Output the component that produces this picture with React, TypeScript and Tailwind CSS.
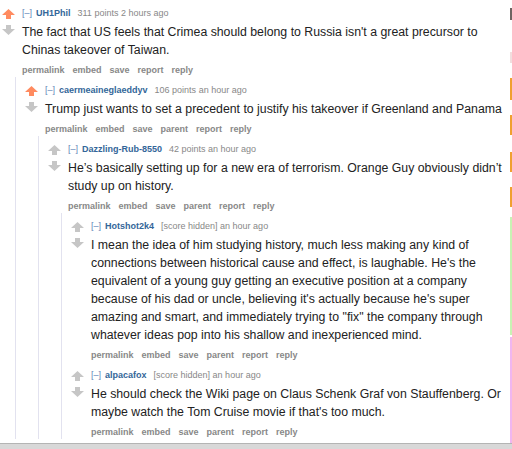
import React from 'react';

type Comment = {
  author: string;
  score: string;
  time: string;
  body: string;
  upvoted?: boolean;
  parent?: boolean;
  replies?: Comment[];
};

const thread: Comment = {
  author: 'UH1Phil',
  score: '311 points',
  time: '2 hours ago',
  upvoted: true,
  body: "The fact that US feels that Crimea should belong to Russia isn't a great precursor to Chinas takeover of Taiwan.",
  replies: [
    {
      author: 'caermeaineglaeddyv',
      score: '106 points',
      time: 'an hour ago',
      upvoted: true,
      parent: true,
      body: 'Trump just wants to set a precedent to justify his takeover if Greenland and Panama',
      replies: [
        {
          author: 'Dazzling-Rub-8550',
          score: '42 points',
          time: 'an hour ago',
          parent: true,
          body: "He\u2019s basically setting up for a new era of terrorism. Orange Guy obviously didn\u2019t study up on history.",
          replies: [
            {
              author: 'Hotshot2k4',
              score: '[score hidden]',
              time: 'an hour ago',
              parent: true,
              body: "I mean the idea of him studying history, much less making any kind of connections between historical cause and effect, is laughable. He's the equivalent of a young guy getting an executive position at a company because of his dad or uncle, believing it's actually because he's super amazing and smart, and immediately trying to \"fix\" the company through whatever ideas pop into his shallow and inexperienced mind.",
            },
            {
              author: 'alpacafox',
              score: '[score hidden]',
              time: 'an hour ago',
              parent: true,
              body: "He should check the Wiki page on Claus Schenk Graf von Stauffenberg. Or maybe watch the Tom Cruise movie if that's too much.",
            },
          ],
        },
      ],
    },
  ],
};

const Arrow = ({ down, color }: { down?: boolean; color: string }) => (
  <svg width="13" height="10" viewBox="0 0 13 10" className={down ? 'rotate-180' : ''}>
    <path d="M6.5 0 L13 6 L9 6 L9 10 L4 10 L4 6 L0 6 Z" fill={color} />
  </svg>
);

const CommentView = ({ c, root }: { c: Comment; root?: boolean }) => {
  const buttons = ['permalink', 'embed', 'save', ...(c.parent ? ['parent'] : []), 'report', 'reply'];
  return (
    <div className={`pt-[7px] ${root ? 'pl-[2px]' : 'pl-[9px]'}`}>
      <div className="flex">
        <div className="w-[13px] shrink-0 mt-[2px] flex flex-col gap-[6px]">
          <Arrow color={c.upvoted ? '#ff8b60' : '#c6c6c6'} />
          <Arrow down color="#c6c6c6" />
        </div>
        <div className="ml-[7px] flex-1 min-w-0">
          <div className="text-[9px] leading-[13px] whitespace-nowrap">
            <span className="text-[#5f86b8]">[–]</span>
            <span className="ml-[4px] font-bold text-[#369]">{c.author}</span>
            <span className="ml-[7px] text-[#888]">
              {c.score} {c.time}
            </span>
          </div>
          <p className="mt-[3px] text-[12.3px] leading-[18px] text-[#222]">{c.body}</p>
          <div className="mt-[5px] flex gap-[8px] text-[9px] leading-[13px] font-bold text-[#888]">
            {buttons.map((b) => (
              <span key={b}>{b}</span>
            ))}
          </div>
        </div>
      </div>
      {c.replies && (
        <div className="ml-[13px] border-l border-[#e2e2ef]">
          {c.replies.map((r) => (
            <CommentView key={r.author} c={r} />
          ))}
        </div>
      )}
    </div>
  );
};

const strips: { h: number; color: string }[] = [
  { h: 8, color: 'transparent' },
  { h: 12, color: '#6e6461' },
  { h: 32, color: 'transparent' },
  { h: 11, color: '#f1dede' },
  { h: 15, color: 'transparent' },
  { h: 22, color: '#f0a030' },
  { h: 15, color: 'transparent' },
  { h: 20, color: '#f0a030' },
  { h: 17, color: 'transparent' },
  { h: 20, color: '#f0a030' },
  { h: 15, color: 'transparent' },
  { h: 20, color: '#f0a030' },
  { h: 10, color: 'transparent' },
  { h: 118, color: '#c8f3b4' },
  { h: 2, color: 'transparent' },
  { h: 106, color: '#f0b6f0' },
];

export default function App() {
  return (
    <div className="w-[512px] h-[449px] overflow-hidden bg-white flex flex-col font-['Liberation_Sans',Arial,sans-serif]">
      <div className="flex flex-1 min-h-0">
        <div className="flex-1 min-w-0 pr-[6px]">
          <CommentView c={thread} root />
        </div>
        <div className="w-[2px] flex flex-col">
          {strips.map((s, i) => (
            <div key={i} style={{ height: s.h, background: s.color }} />
          ))}
        </div>
      </div>
      <div className="h-[6px] shrink-0 border-t border-[#b4b4b4] bg-[#d8d8d8]" />
    </div>
  );
}
